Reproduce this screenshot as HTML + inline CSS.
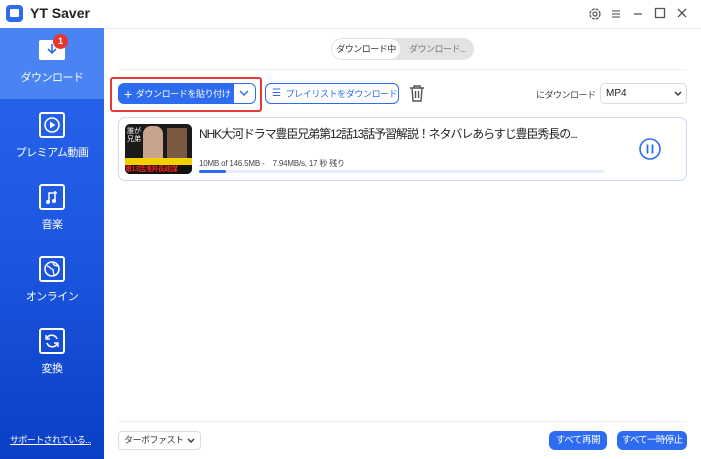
<!DOCTYPE html>
<html><head><meta charset="utf-8"><style>
*{margin:0;padding:0;box-sizing:border-box}
body{width:701px;height:459px;overflow:hidden;background:#fff;font-family:"Liberation Sans","Noto Sans CJK JP",sans-serif;position:relative;color:#333}
.abs{position:absolute;white-space:nowrap}
.side{left:0;top:28px;width:104px;height:431px;background:linear-gradient(180deg,#2a66ee 0%,#1d57e0 50%,#0a3fc6 100%)}
.act{left:0;top:0;width:104px;height:71px;background:#4a84f3}
.item{position:absolute;left:0;width:104px;text-align:center;color:#fff;font-size:11px;letter-spacing:-0.5px;white-space:nowrap}
.ic{width:26px;height:26px;border:2px solid #fff;border-radius:3px;margin:0 auto 6px;display:flex;align-items:center;justify-content:center}
.btn{border-radius:6px;font-size:9px;letter-spacing:-0.4px;display:flex;align-items:center}
.j{letter-spacing:-0.5px}
</style></head><body>
<!-- title bar -->
<div class="abs" style="left:6px;top:5px;width:17px;height:17px;background:#2d6cf0;border-radius:4px"></div>
<div class="abs" style="left:10px;top:9px;width:9px;height:8px;background:#fff;border-radius:1px"></div>
<div class="abs" style="left:30px;top:5px;font-size:14px;font-weight:bold;color:#222">YT Saver</div>
<svg class="abs" style="left:588px;top:7px" width="14" height="14" viewBox="0 0 14 14"><circle cx="7" cy="7" r="5" fill="none" stroke="#555" stroke-width="1.3" stroke-dasharray="3 1"/><circle cx="7" cy="7" r="2" fill="none" stroke="#555" stroke-width="1.2"/></svg>
<svg class="abs" style="left:610px;top:8px" width="12" height="12"><path d="M2 3h8M2 6h8M2 9h8" stroke="#666" stroke-width="1.2"/></svg>
<svg class="abs" style="left:632px;top:8px" width="12" height="12"><path d="M2 6h8" stroke="#555" stroke-width="1.3"/></svg>
<svg class="abs" style="left:654px;top:7px" width="12" height="12"><rect x="1.5" y="1.5" width="9" height="9" fill="none" stroke="#555" stroke-width="1.3"/></svg>
<svg class="abs" style="left:676px;top:7px" width="12" height="12"><path d="M2 2l8 8M10 2l-8 8" stroke="#555" stroke-width="1.3"/></svg>
<div class="abs" style="left:104px;top:28px;width:597px;height:1px;background:#eee"></div>
<!-- sidebar -->
<div class="abs side">
 <div class="abs act"></div>
 <div class="item" style="top:12px"><div style="width:26px;height:20px;background:#fff;border-radius:2px;margin:0 auto 9px;position:relative"><svg width="26" height="20"><path d="M13 4v9M9 9l4 4 4-4" stroke="#2d6cf0" stroke-width="1.6" fill="none"/></svg><div style="position:absolute;left:14px;top:-6px;width:15px;height:15px;border-radius:50%;background:#e8352f;color:#fff;font-size:9px;line-height:15px;font-weight:bold;letter-spacing:0">1</div></div>ダウンロード</div>
 <div class="item" style="top:84px"><div class="ic"><svg width="18" height="18"><circle cx="9" cy="9" r="7" fill="none" stroke="#fff" stroke-width="1.6"/><path d="M7 5.5v7l5.5-3.5z" fill="#fff"/></svg></div>プレミアム動画</div>
 <div class="item" style="top:156px"><div class="ic"><svg width="18" height="18"><path d="M6 14V5h6v8M12 3v4M10 5h4" stroke="#fff" stroke-width="1.5" fill="none"/><circle cx="5" cy="14" r="2" fill="#fff"/><circle cx="11" cy="13" r="2" fill="#fff"/></svg></div>音楽</div>
 <div class="item" style="top:228px"><div class="ic"><svg width="18" height="18"><circle cx="9" cy="9" r="7" fill="none" stroke="#fff" stroke-width="1.6"/><path d="M4 6c3 0 3 3 5 3s1 4 2 6M10 3c0 2 3 3 5 3" stroke="#fff" stroke-width="1.3" fill="none"/></svg></div>オンライン</div>
 <div class="item" style="top:300px"><div class="ic"><svg width="18" height="18"><path d="M14 7a5.5 5.5 0 0 0-10-1M4 11a5.5 5.5 0 0 0 10 1" stroke="#fff" stroke-width="1.6" fill="none"/><path d="M3 3v4h4M15 15v-4h-4" stroke="#fff" stroke-width="1.4" fill="none"/></svg></div>変換</div>
 <div class="abs" style="left:10px;top:405px;color:#fff;font-size:9px;letter-spacing:-0.6px;text-decoration:underline">サポートされている...</div>
</div>
<!-- tabs -->
<div class="abs" style="left:331px;top:38px;width:143px;height:22px;background:#e3e3e3;border-radius:11px"></div>
<div class="abs j" style="left:332px;top:39px;width:68px;height:20px;background:#fff;border-radius:10px;font-size:9px;line-height:20px;text-align:center;color:#333">ダウンロード中</div>
<div class="abs j" style="left:409px;top:39px;font-size:9px;line-height:20px;color:#777">ダウンロード...</div>
<div class="abs" style="left:118px;top:69px;width:568px;height:1px;background:#eee"></div>
<!-- toolbar -->
<div class="abs" style="left:110px;top:77px;width:152px;height:35px;border:2.5px solid #e23a35;border-radius:3px"></div>
<div class="abs btn" style="left:118px;top:83px;width:138px;height:21px;background:#2d6cf0;color:#fff;border-radius:6px"><span style="font-size:14px;margin:0 4px 0 6px">+</span>ダウンロードを貼り付け</div>
<div class="abs" style="left:234px;top:84px;width:21px;height:19px;background:#fff;border-radius:0 5px 5px 0"></div>
<svg class="abs" style="left:238px;top:87px" width="12" height="12"><path d="M2 4l4 4 4-4" stroke="#2d6cf0" stroke-width="1.5" fill="none"/></svg>
<div class="abs btn" style="left:265px;top:83px;width:134px;height:21px;border:1.5px solid #2d6cf0;color:#2d6cf0"><span style="margin:0 5px 0 6px;font-size:10px">☰</span>プレイリストをダウンロード</div>
<svg class="abs" style="left:408px;top:84px" width="18" height="19"><path d="M2 4h14M6 4V2h6v2M4 4l1 13h8l1-13M7.5 7v7M10.5 7v7" stroke="#555" stroke-width="1.4" fill="none"/></svg>
<div class="abs j" style="left:536px;top:88px;font-size:9px;color:#444">にダウンロード</div>
<div class="abs" style="left:600px;top:83px;width:87px;height:21px;border:1px solid #ddd;border-radius:5px;font-size:10px;line-height:19px;padding-left:5px;color:#222">MP4</div>
<svg class="abs" style="left:673px;top:89px" width="10" height="10"><path d="M2 3l3 3 3-3" stroke="#333" stroke-width="1.4" fill="none"/></svg>
<!-- item card -->
<div class="abs" style="left:118px;top:117px;width:569px;height:64px;border:1px solid #cdd9f5;border-radius:7px"></div>
<div class="abs" style="left:125px;top:124px;width:67px;height:50px;background:#1a1a1a;border-radius:5px;overflow:hidden">
 <div class="abs" style="left:18px;top:2px;width:20px;height:34px;background:#c9a48c;border-radius:8px 8px 0 0"></div>
 <div class="abs" style="left:42px;top:4px;width:20px;height:32px;background:#7a5a40"></div>
 <div class="abs" style="left:2px;top:4px;color:#fff;font-size:7px;line-height:8px">誰が<br>兄弟</div>
 <div class="abs" style="left:0;top:34px;width:67px;height:7px;background:#f2d000"></div>
 <div class="abs" style="left:0;top:41px;width:67px;height:9px;background:#111;color:#e22;font-size:7px;line-height:9px;font-weight:bold;letter-spacing:-0.5px">第13話浅井長政謀</div>
</div>
<div class="abs" style="left:199px;top:125px;font-size:12px;letter-spacing:-1.1px;color:#222">NHK大河ドラマ豊臣兄弟第12話13話予習解説！ネタバレあらすじ豊臣秀長の...</div>
<div class="abs" style="left:199px;top:158px;font-size:8px;letter-spacing:-0.2px;color:#444">10MB of 146.5MB -&nbsp;&nbsp;&nbsp; 7.94MB/s, 17 秒 残り</div>
<div class="abs" style="left:199px;top:170px;width:405px;height:3px;background:#e6ecfb;border-radius:2px"></div>
<div class="abs" style="left:199px;top:170px;width:27px;height:3px;background:#2d6cf0;border-radius:2px"></div>
<svg class="abs" style="left:638px;top:137px" width="24" height="24"><circle cx="12" cy="12" r="10" fill="none" stroke="#2d6cf0" stroke-width="1.6"/><path d="M9.5 7.5v9M14.5 7.5v9" stroke="#2d6cf0" stroke-width="1.8"/></svg>
<!-- bottom -->
<div class="abs" style="left:118px;top:421px;width:568px;height:1px;background:#eee"></div>
<div class="abs j" style="left:118px;top:431px;width:83px;height:19px;border:1px solid #ddd;border-radius:4px;font-size:9px;line-height:17px;padding-left:5px;color:#333">ターボファスト</div>
<svg class="abs" style="left:186px;top:436px" width="10" height="10"><path d="M2 3l3 3 3-3" stroke="#333" stroke-width="1.4" fill="none"/></svg>
<div class="abs" style="left:549px;top:431px;width:58px;height:19px;background:#2d6cf0;border-radius:6px;color:#fff;font-size:9.5px;letter-spacing:-0.4px;line-height:19px;text-align:center">すべて再開</div>
<div class="abs" style="left:617px;top:431px;width:70px;height:19px;background:#2d6cf0;border-radius:6px;color:#fff;font-size:9.5px;letter-spacing:-0.7px;line-height:19px;text-align:center">すべて一時停止</div>
</body></html>
